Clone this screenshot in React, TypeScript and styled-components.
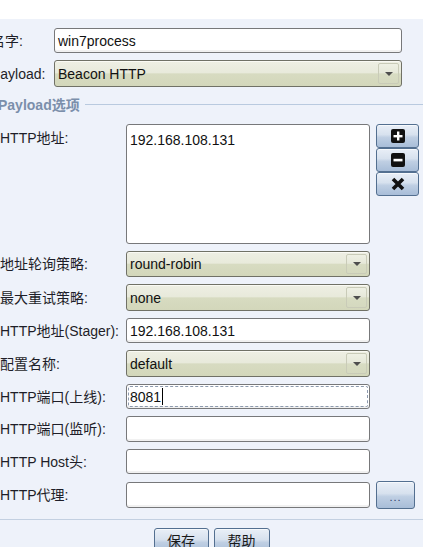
import React from 'react';
import styled, { createGlobalStyle } from 'styled-components';

const GlobalStyle = createGlobalStyle`
  html, body {
    margin: 0;
    padding: 0;
    background: #eef2fa;
    font-family: "Liberation Sans", "Noto Sans CJK SC", sans-serif;
    font-size: 14px;
    color: #1c1c1c;
    overflow: hidden;
  }
`;

const Page = styled.div`
  width: 423px;
  height: 547px;
  overflow: hidden;
  display: flex;
  flex-direction: column;
`;

const TopStrip = styled.div`
  height: 19px;
  background: #ffffff;
  flex: none;
`;

const Panel = styled.div`
  flex: 1;
  background: #eef2fa;
  padding-top: 9px;
  display: flex;
  flex-direction: column;
`;

const MainForm = styled.div`
  display: grid;
  grid-template-columns: 63px 348px;
  row-gap: 7px;
  margin-left: -9px;
  align-items: center;
`;

const OptionsGrid = styled.div`
  display: grid;
  grid-template-columns: 126px 244px 43px;
  row-gap: 7px;
  align-items: center;
  margin-top: 11px;
`;

const Label = styled.div<{ $top?: boolean }>`
  white-space: nowrap;
  color: #1e1e28;
  line-height: 16px;
  align-self: ${(p) => (p.$top ? 'start' : 'center')};
  padding-top: ${(p) => (p.$top ? '6px' : '0')};
`;

const Field = styled.div<{ $h?: number; $focus?: boolean }>`
  position: relative;
  box-sizing: border-box;
  height: ${(p) => p.$h ?? 26}px;
  border: 1px solid #77787a;
  border-radius: 3px;
  background: #ffffff;
  box-shadow: inset 0 -2px 0 #f1f1f1;
  padding: 0 3px;
  display: flex;
  align-items: center;
  color: #111;
  white-space: nowrap;
  ${(p) =>
    p.$focus &&
    `
    &::after {
      content: "";
      position: absolute;
      inset: 1px;
      border: 1px dashed #8d9aae;
      border-radius: 2px;
      pointer-events: none;
    }
  `}
`;

const TextArea = styled.div`
  box-sizing: border-box;
  height: 120px;
  border: 1px solid #77787a;
  border-radius: 3px;
  background: #ffffff;
  padding: 7px 3px;
  color: #111;
  line-height: 16px;
  align-self: start;
`;

const Caret = styled.span`
  display: inline-block;
  width: 1px;
  height: 17px;
  background: #000;
  margin-left: 1px;
`;

const ComboBox = styled.div<{ $h?: number }>`
  box-sizing: border-box;
  height: ${(p) => p.$h ?? 27}px;
  border: 1px solid #707166;
  border-radius: 3px;
  background: linear-gradient(
    to bottom,
    #eeefe4 0%,
    #e8eadb 46%,
    #d7dbc1 52%,
    #d3d7bb 100%
  );
  box-shadow: inset 0 1px 0 #fafaf4;
  display: flex;
  align-items: center;
  padding: 0 2px 0 3px;
  color: #111;
`;

const ComboText = styled.span`
  flex: 1;
  white-space: nowrap;
`;

const ArrowCell = styled.div`
  box-sizing: border-box;
  width: 21px;
  height: calc(100% - 4px);
  border: 1px solid #c9cbb8;
  border-radius: 2px;
  background: linear-gradient(to bottom, #eef0e4 0%, #e6e8d9 46%, #d8dcc3 52%, #d5d9bf 100%);
  display: flex;
  align-items: center;
  justify-content: center;

  &::after {
    content: "";
    border-top: 4px solid #4e4e4e;
    border-left: 4px solid transparent;
    border-right: 4px solid transparent;
  }
`;

const SectionTitle = styled.div`
  display: flex;
  align-items: center;
  gap: 5px;
  margin-top: 8px;
  margin-left: -2px;
  height: 18px;
  font-weight: bold;
  color: #7b8fab;
`;

const Rule = styled.div`
  flex: 1;
  height: 1px;
  background: #b9cadf;
`;

const SideCell = styled.div<{ $top?: boolean }>`
  padding-left: 6px;
  align-self: ${(p) => (p.$top ? 'start' : 'center')};
  display: flex;
  flex-direction: column;
`;

const BlueButton = styled.button<{ $w?: number; $h?: number }>`
  box-sizing: border-box;
  width: ${(p) => p.$w ?? 43}px;
  height: ${(p) => p.$h ?? 24}px;
  margin: 0;
  padding: 0;
  border: 1px solid #536f90;
  border-radius: 3px;
  background: linear-gradient(
    to bottom,
    #e9eff7 0%,
    #d7e1ee 44%,
    #bfcfe3 56%,
    #a8bdd8 100%
  );
  box-shadow: inset 0 1px 0 #f6f9fc;
  display: flex;
  align-items: center;
  justify-content: center;
  font-family: "Liberation Sans", "Noto Sans CJK SC", sans-serif;
  font-size: 14px;
  color: #1a1a1a;
`;

const FooterButton = styled(BlueButton)`
  align-items: flex-start;
  padding-top: 1px;
  border-radius: 3px 3px 0 0;
  height: 26px;
`;

const Divider = styled.div`
  height: 1px;
  background: #c3d0e1;
  margin-top: 10px;
`;

const Footer = styled.div`
  display: flex;
  justify-content: center;
  gap: 5px;
  margin-top: 8px;
`;

const Dots = styled.span`
  color: #2a3a66;
  font-size: 11px;
  letter-spacing: 1px;
  margin-top: 4px;
`;

const PlusIcon = () => (
  <svg width="14" height="14" viewBox="0 0 14 14">
    <rect x="0" y="0" width="14" height="14" rx="2" fill="#111" />
    <rect x="6" y="2.5" width="2.4" height="9" fill="#fff" />
    <rect x="2.5" y="6" width="9" height="2.4" fill="#fff" />
  </svg>
);

const MinusIcon = () => (
  <svg width="14" height="14" viewBox="0 0 14 14">
    <rect x="0" y="0" width="14" height="14" rx="2" fill="#111" />
    <rect x="2.5" y="5.8" width="9" height="2.6" fill="#fff" />
  </svg>
);

const CrossIcon = () => (
  <svg width="14" height="14" viewBox="0 0 14 14">
    <path d="M2 2 L12 12 M12 2 L2 12" stroke="#111" strokeWidth="3.6" strokeLinecap="butt" />
  </svg>
);

const Combo: React.FC<{ value: string; h?: number }> = ({ value, h }) => (
  <ComboBox $h={h}>
    <ComboText>{value}</ComboText>
    <ArrowCell />
  </ComboBox>
);

export default function App() {
  return (
    <Page>
      <GlobalStyle />
      <TopStrip />
      <Panel>
        <MainForm>
          <Label>名字:</Label>
          <Field $h={25}>win7process</Field>
          <Label>Payload:</Label>
          <Combo value="Beacon HTTP" h={27} />
        </MainForm>

        <SectionTitle>
          <span>Payload选项</span>
          <Rule />
        </SectionTitle>

        <OptionsGrid>
          <Label $top>HTTP地址:</Label>
          <TextArea>192.168.108.131</TextArea>
          <SideCell $top>
            <BlueButton><PlusIcon /></BlueButton>
            <BlueButton><MinusIcon /></BlueButton>
            <BlueButton><CrossIcon /></BlueButton>
          </SideCell>

          <Label>地址轮询策略:</Label>
          <Combo value="round-robin" h={26} />
          <span />

          <Label>最大重试策略:</Label>
          <Combo value="none" h={27} />
          <span />

          <Label>HTTP地址(Stager):</Label>
          <Field $h={25}>192.168.108.131</Field>
          <span />

          <Label>配置名称:</Label>
          <Combo value="default" h={27} />
          <span />

          <Label>HTTP端口(上线):</Label>
          <Field $h={25} $focus>
            8081<Caret />
          </Field>
          <span />

          <Label>HTTP端口(监听):</Label>
          <Field $h={26} />
          <span />

          <Label>HTTP Host头:</Label>
          <Field $h={25} />
          <span />

          <Label>HTTP代理:</Label>
          <Field $h={26} />
          <SideCell>
            <BlueButton $w={39} $h={28}>
              <Dots>...</Dots>
            </BlueButton>
          </SideCell>
        </OptionsGrid>

        <Divider />

        <Footer>
          <FooterButton $w={55}>保存</FooterButton>
          <FooterButton $w={56}>帮助</FooterButton>
        </Footer>
      </Panel>
    </Page>
  );
}
